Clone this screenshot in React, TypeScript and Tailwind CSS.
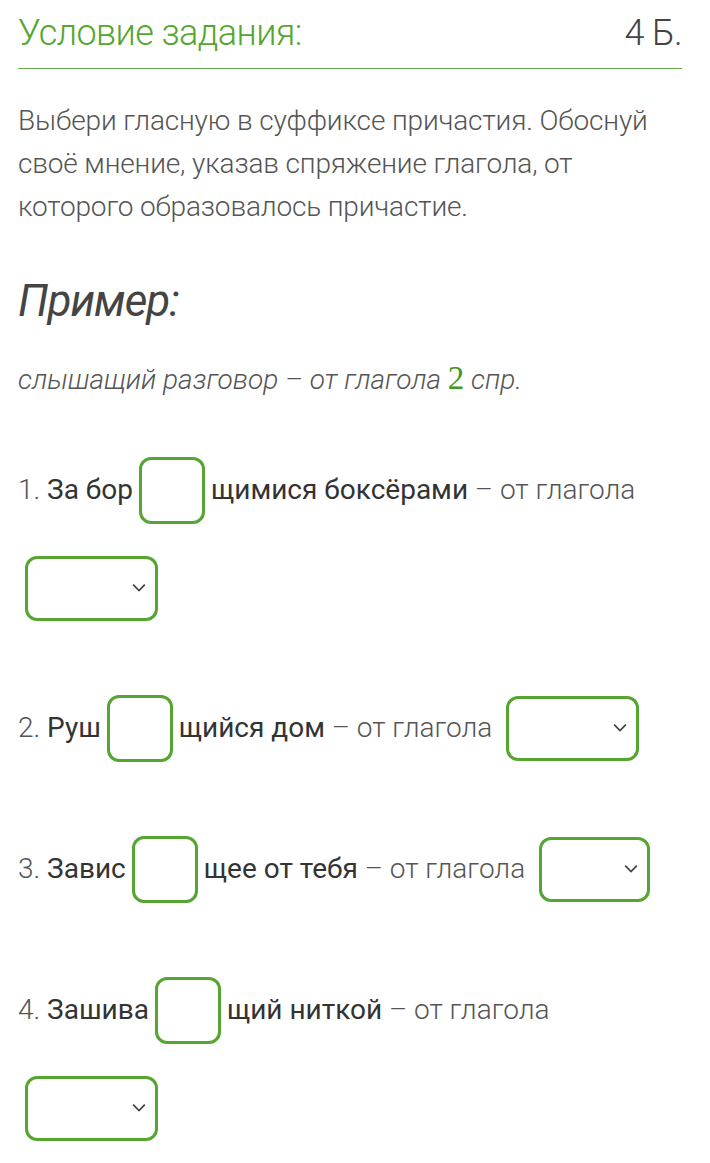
import type { ReactNode } from "react";

const GREEN_BORDER = "border-[3px] border-[#55a531]";

function Blank() {
  return <span className={`inline-block w-[66px] h-[67px] rounded-[12px] ${GREEN_BORDER} mx-[6px] bg-white`} />;
}

function Choice({ width = "w-[133px]" }: { width?: string }) {
  return (
    <span
      className={`relative inline-flex items-center justify-end ${width} h-[65px] rounded-[12px] ${GREEN_BORDER} ml-[7px] pr-[9px] bg-white`}
    >
      <svg viewBox="0 0 12 8" className="w-[14px] h-[10px]" fill="none" stroke="#444" strokeWidth="1.5">
        <path d="M1 1.2l5 5 5-5" />
      </svg>
    </span>
  );
}

function Task({ children }: { children: ReactNode }) {
  return <div className="flex flex-wrap items-center gap-y-[32px] text-[28px] leading-none">{children}</div>;
}

export default function App() {
  return (
    <div
      className="min-h-screen bg-white pl-[18px] pr-[28px] pt-[6px] pb-[20px] text-[#555]"
      style={{ fontFamily: "Roboto, 'Liberation Sans', sans-serif" }}
    >
      {/* header */}
      <div className="flex items-center justify-between border-b border-[#6ab04c] pb-[8px]">
        <h1 className="text-[36px] font-light text-[#55a531] tracking-[-0.6px]">Условие задания:</h1>
        <span className="text-[36px] font-light text-[#444] tracking-[-0.6px]">4 Б.</span>
      </div>

      <p className="mt-[30px] text-[28px] font-light leading-[43px] tracking-[-0.15px] text-[#555]">
        Выбери гласную в суффиксе причастия. Обоснуй своё мнение, указав спряжение глагола, от которого
        образовалось причастие.
      </p>

      <h2 className="mt-[40px] text-[44px] italic text-[#444] tracking-[-1px]">Пример:</h2>

      <p className="mt-[20px] text-[28px] italic font-light text-[#555]">
        слышащий разговор – от глагола{" "}
        <b className="text-[33px] not-italic text-[#3f9a24]" style={{ fontFamily: "'Liberation Serif', serif" }}>
          2
        </b>{" "}
        спр.
      </p>

      <div className="mt-[53px] flex flex-col gap-[74px]">
        <Task>
          <span className="font-light">1.&nbsp;</span>
          <span className="text-[#333]">За бор</span>
          <Blank />
          <span className="text-[#333]">щимися боксёрами</span>
          <span className="font-light">&nbsp;– от глагола</span>
          <Choice />
        </Task>
        <Task>
          <span className="font-light">2.&nbsp;</span>
          <span className="text-[#333]">Руш</span>
          <Blank />
          <span className="text-[#333]">щийся дом</span>
          <span className="font-light">&nbsp;– от глагола&nbsp;</span>
          <Choice />
        </Task>
        <Task>
          <span className="font-light">3.&nbsp;</span>
          <span className="text-[#333]">Завис</span>
          <Blank />
          <span className="text-[#333]">щее от тебя</span>
          <span className="font-light">&nbsp;– от глагола&nbsp;</span>
          <Choice width="w-[111px]" />
        </Task>
        <Task>
          <span className="font-light">4.&nbsp;</span>
          <span className="text-[#333]">Зашива</span>
          <Blank />
          <span className="text-[#333]">щий ниткой</span>
          <span className="font-light">&nbsp;– от глагола</span>
          <Choice />
        </Task>
      </div>
    </div>
  );
}
